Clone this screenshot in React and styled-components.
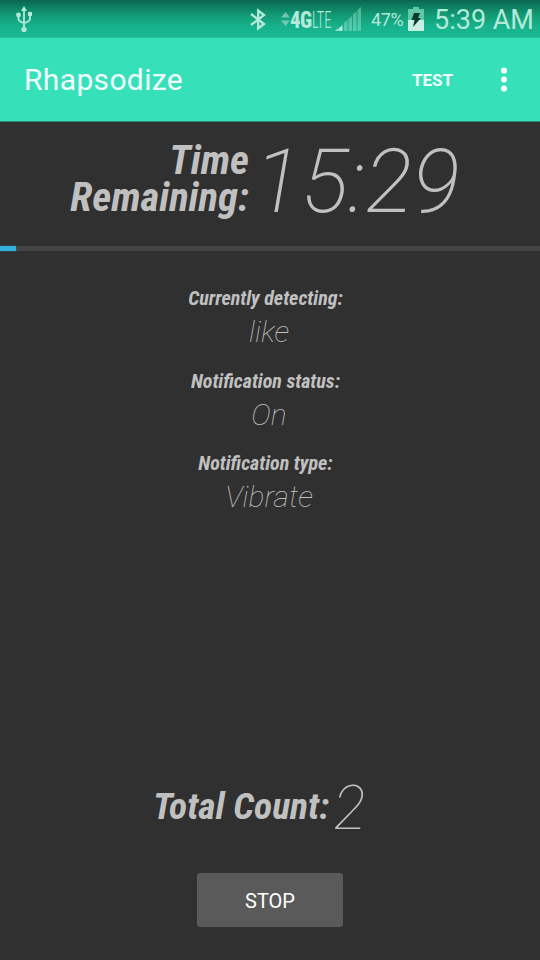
import React from "react";
import styled, { createGlobalStyle } from "styled-components";

const Global = createGlobalStyle`
  * { box-sizing: border-box; }
  body { margin: 0; background: #303030; }
`;

const Screen = styled.div`
  width: 540px;
  height: 960px;
  overflow: hidden;
  display: flex;
  flex-direction: column;
  background: #303030;
  color: #c0c0c0;
  font-family: Roboto, "Liberation Sans", sans-serif;
`;

const StatusBar = styled.header`
  height: 38px;
  flex: none;
  display: flex;
  align-items: center;
  padding: 0 0 0 15px;
  color: #b4ead9;
  background: linear-gradient(#0b6650 0, #129873 14px, #17b38e 27px, #18b690 36px, #26c39d 38px);
`;

const Spacer = styled.span`
  flex: 1;
`;

const StatusIcon = styled.svg`
  display: block;
  flex: none;
  margin-right: ${(p) => p.$gap || 0}px;
`;

const Network = styled.span`
  font-size: 24px;
  font-stretch: 75%;
  font-weight: ${(p) => p.$weight};
  line-height: 38px;
  width: ${(p) => p.$width}px;
  padding-top: 1px;
  letter-spacing: ${(p) => p.$tracking}px;
  white-space: nowrap;
  font-family: "Roboto Condensed", Roboto, sans-serif;
  transform: scaleX(${(p) => p.$squeeze});
  transform-origin: left;
`;

const Battery = styled.span`
  font-size: 18px;
  line-height: 38px;
  width: 37px;
  padding-top: 2px;
  letter-spacing: -0.4px;
  white-space: nowrap;
`;

const Clock = styled.span`
  font-size: 27px;
  line-height: 38px;
  width: 106px;
  padding-top: 1px;
  white-space: nowrap;
`;

const AppBar = styled.nav`
  height: 84px;
  flex: none;
  display: flex;
  align-items: center;
  padding: 0 31px 0 24px;
  background: #36e1b9;
  color: #f2fffc;
  border-bottom: 1px solid #2b8a74;
`;

const Title = styled.h1`
  margin: 0;
  flex: 1;
  font-size: 30px;
  font-weight: 400;
  letter-spacing: 0.35px;
  line-height: 84px;
  padding-top: 1px;
`;

const Action = styled.button`
  border: 0;
  padding: 0;
  background: none;
  color: inherit;
  font: 700 17px/84px Roboto, sans-serif;
  margin-right: 46px;
`;

const TimeRow = styled.section`
  display: flex;
  height: 124px;
  flex: none;
`;

const Label = styled.span`
  font-family: "Roboto Condensed", Roboto, sans-serif;
  font-stretch: 75%;
  font-style: italic;
  font-weight: 700;
  font-size: ${(p) => p.$size}px;
  line-height: ${(p) => p.$line}px;
  white-space: nowrap;
`;

const Value = styled.span`
  font-style: italic;
  font-weight: ${(p) => p.$weight || 100};
  font-size: ${(p) => p.$size}px;
  line-height: ${(p) => p.$line}px;
  white-space: nowrap;
`;

const TimeLabel = styled(Label)`
  display: block;
  width: 249px;
  padding-top: 20px;
  margin-right: 5px;
  padding-left: 60px;
  text-align: right;
  white-space: normal;
`;

const TimeValue = styled.div`
  padding-top: 8px;
`;

const Track = styled.div`
  height: 5px;
  flex: none;
  background: #444;
`;

const Progress = styled.div`
  width: 16px;
  height: 5px;
  background: #35b0dc;
  box-shadow: 0 0 2px #35b0dc80;
`;

const Details = styled.section`
  flex: 1;
  padding-top: 35px;
`;

const Detail = styled.div`
  height: 82.5px;
  width: 531px;
  display: flex;
  flex-direction: column;
  align-items: center;
`;

const DetailValue = styled(Value)`
  padding: 0 0 0 7px;
`;

const CountRow = styled.section`
  height: 100px;
  flex: none;
  display: flex;
  gap: 4px;
  padding-left: 153px;
`;

const Stop = styled.button`
  width: 146px;
  height: 54px;
  flex: none;
  margin: 0 auto 33px 197px;
  border: 0;
  border-radius: 3px;
  background: #5a5a5a;
  color: #fff;
  font: 400 20px/54px Roboto, sans-serif;
`;

const details = [
  ["Currently detecting:", "like"],
  ["Notification status:", "On"],
  ["Notification type:", "Vibrate"],
];

const signalBars = [
  { x: 0, h: 3, on: true },
  { x: 4, h: 6, on: true },
  { x: 9, h: 11 },
  { x: 13.5, h: 15 },
  { x: 18, h: 19.5 },
  { x: 22.5, h: 24 },
];

export default function App() {
  return (
    <Screen>
      <Global />
      <StatusBar>
        <StatusIcon width="18" height="27" viewBox="0 0 18 27" fill="none" stroke="currentColor" strokeWidth="1.8">
          <path d="M9 4v19M3.500 9v4q0 2.500 5.500 4M15 8v5q0 2.500-6 4" />
          <path d="M9 0l3 5H6z" fill="currentColor" stroke="none" />
          <circle cx="9" cy="23.500" r="2.600" fill="currentColor" stroke="none" />
          <circle cx="3.500" cy="9" r="2.400" fill="currentColor" stroke="none" />
          <path d="M13 6h4v4h-4z" fill="currentColor" stroke="none" />
        </StatusIcon>
        <Spacer />
        <StatusIcon $gap={15} width="16" height="24" viewBox="0 0 16 24" fill="none" stroke="currentColor" strokeWidth="2.300">
          <path d="M1 7L14 17L8.200 21.500V3.500L14 8L1 18" />
        </StatusIcon>
        <StatusIcon width="9" height="14" viewBox="0 0 9 14" fill="currentColor" opacity=".55">
          <path d="M4.500 0l4.500 5.500H0zM4.500 14L0 8.500h9z" />
        </StatusIcon>
        <Network $weight={800} $width={22} $tracking={-0.5} $squeeze={0.86}>4G</Network>
        <Network $weight={300} $width={23} $tracking={0} $squeeze={0.6}>LTE</Network>
        <StatusIcon $gap={10} width="26" height="24" viewBox="0 0 26 24" fill="currentColor">
          {signalBars.map(({ x, h, on }) => (
            <path
              key={x}
              d={`M${x} 24V${Math.min(24, 27 - h)}L${x + 3.5} ${24 - h}V24z`}
              opacity={on ? 1 : 0.4}
            />
          ))}
        </StatusIcon>
        <Battery>47%</Battery>
        <StatusIcon $gap={10} width="16" height="24" viewBox="0 0 16 24">
          <path d="M0 2h5V0h6v2h5v11H0z" fill="#62c7a7" />
          <path d="M0 13h16v11H0z" fill="#c7f0e3" />
          <path d="M6 6h6l-2 5h3L5 20l1.500-7H3.500z" fill="#07392d" />
        </StatusIcon>
        <Clock>5:39 AM</Clock>
      </StatusBar>
      <AppBar>
        <Title>Rhapsodize</Title>
        <Action>TEST</Action>
        <StatusIcon width="10" height="26" viewBox="0 0 10 26" fill="currentColor">
          <circle cx="5" cy="3.500" r="3.100" />
          <circle cx="5" cy="12.500" r="3.100" />
          <circle cx="5" cy="21.500" r="3.100" />
        </StatusIcon>
      </AppBar>
      <TimeRow>
        <TimeLabel $size={40.8} $line={37}>Time Remaining:</TimeLabel>
        <TimeValue>
          <Value $size={88.5} $line={105} $weight={170}>15:29</Value>
        </TimeValue>
      </TimeRow>
      <Track>
        <Progress />
      </Track>
      <Details>
        {details.map(([label, value]) => (
          <Detail key={label}>
            <Label $size={20} $line={24}>{label}</Label>
            <DetailValue $size={30} $line={44}>{value}</DetailValue>
          </Detail>
        ))}
      </Details>
      <CountRow>
        <Label $size={37.6} $line={67}>Total Count:</Label>
        <Value $size={60.5} $line={71}>2</Value>
      </CountRow>
      <Stop>STOP</Stop>
    </Screen>
  );
}
